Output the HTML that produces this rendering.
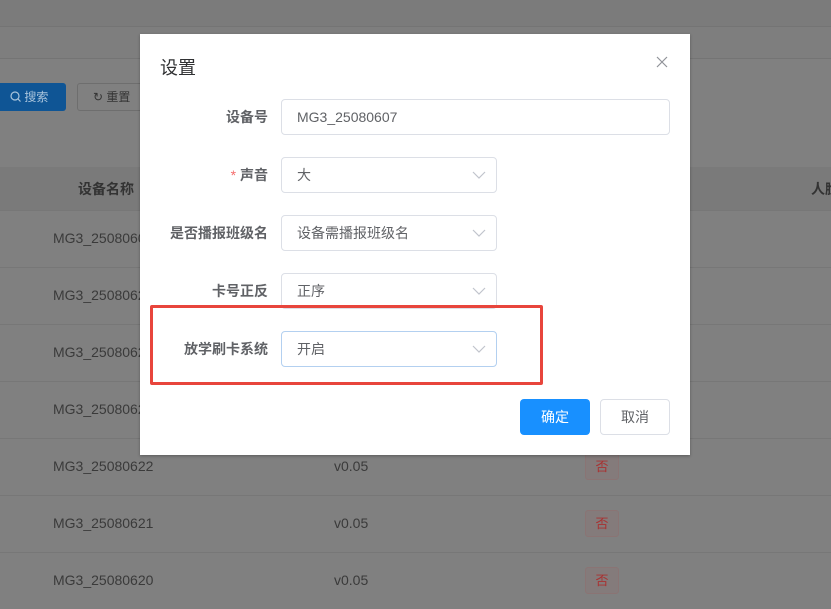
<!DOCTYPE html>
<html><head><meta charset="utf-8"><style>
*{margin:0;padding:0;box-sizing:border-box}
body{width:831px;height:609px;overflow:hidden;background:#808080;font-family:"Liberation Sans","Noto Sans CJK SC",sans-serif;position:relative}
.abs{position:absolute;white-space:nowrap}
.t{color:#3a3a3a;font-size:14px}
.hl{position:absolute;left:0;width:831px;height:1px;background:#777}
.tag{position:absolute;left:585px;width:34px;height:27px;border:1px solid #8a7474;background:#847b7b;border-radius:3px;color:#a83232;font-size:13px;text-align:center;line-height:25px}
.dlg{position:absolute;left:140px;top:34px;width:550px;height:421px;background:#fff;box-shadow:0 1px 3px rgba(0,0,0,.3)}
.lbl{position:absolute;right:422px;font-size:14px;font-weight:bold;color:#606266;line-height:20px;white-space:nowrap}
.inp{position:absolute;left:141px;height:36px;border:1px solid #dcdfe6;border-radius:4px;font-size:14px;color:#606266;padding-left:15px;line-height:34px}
.sel{width:216px}
.sel svg{position:absolute;right:10px;top:13px}
</style></head><body>
<div class="abs" style="left:0;top:0;width:831px;height:26px;background:#7b7b7b"></div>
<div class="hl" style="top:26px;background:#747474"></div>
<div class="abs" style="left:0;top:27px;width:831px;height:32px;background:#7e7e7e"></div>
<div class="hl" style="top:58px;background:#747474"></div>
<div class="abs" style="left:0;top:83px;width:66px;height:28px;background:#0f5595;border-radius:0 3px 3px 0;color:#a9c4dc;font-size:12px;line-height:28px;padding-left:10px">
<svg width="11" height="11" style="vertical-align:-1px"><circle cx="5" cy="5" r="4" fill="none" stroke="#a9c4dc" stroke-width="1.2"/><path d="M8 8l2.5 2.5" stroke="#a9c4dc" stroke-width="1.2"/></svg> 搜索</div>
<div class="abs" style="left:77px;top:83px;width:70px;height:28px;border:1px solid #6e6e6e;border-radius:3px;color:#333;font-size:12px;line-height:26px;padding-left:15px">↻ 重置</div>
<div class="abs" style="left:0;top:167px;width:831px;height:43px;background:#7a7a7a"></div>
<div class="abs t" style="left:78px;top:179px;font-weight:bold;color:#333">设备名称</div>
<div class="abs t" style="left:811px;top:179px;font-weight:bold;color:#333">人脸</div>
<div class="hl" style="top:210px"></div><div class="hl" style="top:267px"></div><div class="hl" style="top:324px"></div><div class="hl" style="top:381px"></div><div class="hl" style="top:438px"></div><div class="hl" style="top:495px"></div><div class="hl" style="top:552px"></div>
<div class="abs t" style="left:53px;top:230px">MG3_25080607</div>
<div class="abs t" style="left:53px;top:287px">MG3_25080623</div>
<div class="abs t" style="left:53px;top:344px">MG3_25080623</div>
<div class="abs t" style="left:53px;top:401px">MG3_25080623</div>
<div class="abs t" style="left:53px;top:458px">MG3_25080622</div>
<div class="abs t" style="left:53px;top:515px">MG3_25080621</div>
<div class="abs t" style="left:53px;top:572px">MG3_25080620</div>
<div class="abs t" style="left:334px;top:458px">v0.05</div>
<div class="abs t" style="left:334px;top:515px">v0.05</div>
<div class="abs t" style="left:334px;top:572px">v0.05</div>
<div class="tag" style="top:453px">否</div>
<div class="tag" style="top:510px">否</div>
<div class="tag" style="top:567px">否</div>

<div class="dlg">
<div class="abs" style="left:20px;top:20px;font-size:18px;color:#303133">设置</div>
<svg class="abs" style="left:516px;top:22px" width="12" height="12"><path d="M1 1L11 11M11 1L1 11" stroke="#909399" stroke-width="1.2"/></svg>
<div class="lbl" style="top:73px">设备号</div>
<div class="inp" style="top:65px;width:389px">MG3_25080607</div>
<div class="lbl" style="top:131px"><span style="color:#f56c6c;font-weight:normal">*</span> 声音</div>
<div class="inp sel" style="top:123px">大<svg width="14" height="8"><path d="M1 1l6 6 6-6" fill="none" stroke="#c0c4cc" stroke-width="1.2"/></svg></div>
<div class="lbl" style="top:189px">是否播报班级名</div>
<div class="inp sel" style="top:181px">设备需播报班级名<svg width="14" height="8"><path d="M1 1l6 6 6-6" fill="none" stroke="#c0c4cc" stroke-width="1.2"/></svg></div>
<div class="lbl" style="top:247px">卡号正反</div>
<div class="inp sel" style="top:239px">正序<svg width="14" height="8"><path d="M1 1l6 6 6-6" fill="none" stroke="#c0c4cc" stroke-width="1.2"/></svg></div>
<div class="lbl" style="top:305px">放学刷卡系统</div>
<div class="inp sel" style="top:297px;border-color:#b3d0f0">开启<svg width="14" height="8"><path d="M1 1l6 6 6-6" fill="none" stroke="#c0c4cc" stroke-width="1.2"/></svg></div>
<div class="abs" style="left:10px;top:271px;width:393px;height:80px;border:3px solid #e8453c;border-radius:2px"></div>
<div class="abs" style="left:380px;top:365px;width:70px;height:36px;background:#1890ff;border-radius:4px;color:#fff;font-size:14px;text-align:center;line-height:36px">确定</div>
<div class="abs" style="left:460px;top:365px;width:70px;height:36px;border:1px solid #dcdfe6;border-radius:4px;color:#606266;font-size:14px;text-align:center;line-height:34px">取消</div>
</div>
</body></html>
